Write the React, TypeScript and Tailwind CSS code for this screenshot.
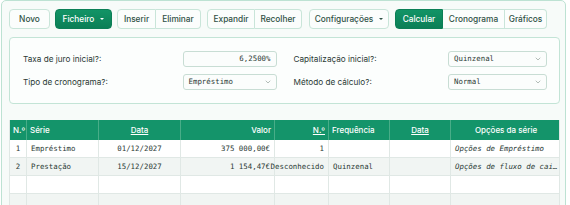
import React from 'react';
import { ChevronDown } from 'lucide-react';

const btnBase =
  "h-[20px] flex items-center justify-center text-[8.3px] font-medium font-['Inter',sans-serif] text-[#2f5145] bg-[#fbfdfc] border border-[#c9e5d9]";
const btnActive =
  "h-[20px] flex items-center justify-center text-[8.3px] font-medium font-['Inter',sans-serif] text-white bg-gradient-to-b from-[#129466] to-[#0b7f56] border border-[#0b7f56]";

function Caret() {
  return (
    <span className="ml-[6px] inline-block w-0 h-0 border-l-[2px] border-r-[2px] border-t-[2.5px] border-l-transparent border-r-transparent border-t-current" />
  );
}

function Field({ label, children }: { label: string; children: React.ReactNode }) {
  return (
    <div className="flex items-center justify-between h-[16px]">
      <span className="text-[8.2px] text-[#2b3a35] font-['Inter',sans-serif]">{label}</span>
      {children}
    </div>
  );
}

function Select({ value, w }: { value: string; w: string }) {
  return (
    <div
      className={`${w} h-[16px] flex items-center justify-between pl-[5px] pr-[4px] bg-[#fbfdfc] border border-[#c8ddd4] rounded-[3px] font-['DejaVu_Sans_Mono',monospace] text-[7.4px] text-[#2b3a35]`}
    >
      <span>{value}</span>
      <ChevronDown size={8} strokeWidth={1.5} className="text-[#6b7c75]" />
    </div>
  );
}

const cols = 'grid grid-cols-[17px_72px_82px_94px_54px_61px_61px_110px]';

export default function App() {
  const hCell =
    "flex items-center h-full px-[3px] border-r border-[#48ad88] text-white text-[8px] font-medium font-['Inter',sans-serif] whitespace-nowrap overflow-hidden";
  const bCell =
    "flex items-center h-full px-[4px] border-r border-[#e0e8e5] text-[7.4px] text-[#2b3a35] font-['DejaVu_Sans_Mono',monospace] whitespace-nowrap";
  const rows = [
    ['1', 'Empréstimo', '01/12/2027', '375 000,00€', '1', '', '', 'Opções de Empréstimo'],
    ['2', 'Prestação', '15/12/2027', '1 154,47€', 'Desconhecido', 'Quinzenal', '', 'Opções de fluxo de cai…'],
    ['', '', '', '', '', '', '', ''],
    ['', '', '', '', '', '', '', ''],
  ];
  return (
    <div className="w-[570px] h-[205px] bg-white overflow-hidden">
      <div className="ml-px w-[565px] h-[220px] bg-[#f7fbf9] border border-[#bde2d3] rounded-[5px] pl-[7px] pr-[5px] pt-[8px]">
        {/* toolbar */}
        <div className="flex items-center">
          <button className={`${btnBase} w-[41px] rounded-[4px]`}>Novo</button>
          <button className={`${btnActive} w-[57px] ml-[5px] rounded-[4px]`}>
            Ficheiro
            <Caret />
          </button>
          <div className="flex ml-[5px]">
            <button className={`${btnBase} w-[39px] rounded-l-[4px]`}>Inserir</button>
            <button className={`${btnBase} w-[45px] border-l-0 rounded-r-[4px]`}>Eliminar</button>
          </div>
          <div className="flex ml-[6px]">
            <button className={`${btnBase} w-[48px] rounded-l-[4px]`}>Expandir</button>
            <button className={`${btnBase} w-[47px] border-l-0 rounded-r-[4px]`}>Recolher</button>
          </div>
          <button className={`${btnBase} w-[80px] ml-[7px] rounded-[4px]`}>
            Configurações
            <Caret />
          </button>
          <div className="flex ml-[6px]">
            <button className={`${btnActive} w-[48px] rounded-l-[4px]`}>Calcular</button>
            <button className={`${btnBase} w-[62px] border-l-0`}>Cronograma</button>
            <button className={`${btnBase} w-[42px] border-l-0 rounded-r-[4px]`}>Gráficos</button>
          </div>
        </div>

        {/* form panel */}
        <div className="mt-[8px] h-[67px] bg-[#fcfefd] border border-[#c3e4d6] rounded-[4px] pl-[13px] pr-[12px] pt-[13px] grid grid-cols-2 gap-x-[17px] gap-y-[7px] content-start">
          <Field label="Taxa de juro inicial?:">
            <div className="w-[94px] h-[16px] flex items-center justify-end pr-[5px] bg-[#fbfdfc] border border-[#c8ddd4] rounded-[3px] font-['DejaVu_Sans_Mono',monospace] text-[7.4px] text-[#2b3a35]">
              6,2500%
            </div>
          </Field>
          <Field label="Capitalização inicial?:">
            <Select value="Quinzenal" w="w-[99px]" />
          </Field>
          <Field label="Tipo de cronograma?:">
            <Select value="Empréstimo" w="w-[94px]" />
          </Field>
          <Field label="Método de cálculo?:">
            <Select value="Normal" w="w-[99px]" />
          </Field>
        </div>

        {/* table */}
        <div className="mt-[16px] w-[551px] border-l border-r border-[#e0e8e5]">
          <div className={`${cols} h-[20px] bg-[#14946a]`}>
            <div className={hCell}>N.º</div>
            <div className={hCell}>Série</div>
            <div className={`${hCell} justify-center underline`}>Data</div>
            <div className={`${hCell} justify-end`}>Valor</div>
            <div className={`${hCell} justify-end underline`}>N.º</div>
            <div className={hCell}>Frequência</div>
            <div className={`${hCell} justify-center underline`}>Data</div>
            <div className={`${hCell} justify-center border-r-0`}>Opções da série</div>
          </div>
          {rows.map((r, i) => (
            <div
              key={i}
              className={`${cols} h-[18px] border-b border-[#e0e8e5] ${i % 2 === 1 ? 'bg-[#f1f5f3]' : 'bg-white'}`}
            >
              <div className={`${bCell} justify-center px-0`}>{r[0]}</div>
              <div className={bCell}>{r[1]}</div>
              <div className={`${bCell} justify-center`}>{r[2]}</div>
              <div className={`${bCell} justify-end`}>{r[3]}</div>
              <div className={`${bCell} justify-end px-0`}>{r[4]}</div>
              <div className={`${bCell} px-[1px]`}>{r[5]}</div>
              <div className={bCell}>{r[6]}</div>
              <div className={`${bCell} border-r-0 italic`}>{r[7]}</div>
            </div>
          ))}
        </div>
      </div>
    </div>
  );
}
